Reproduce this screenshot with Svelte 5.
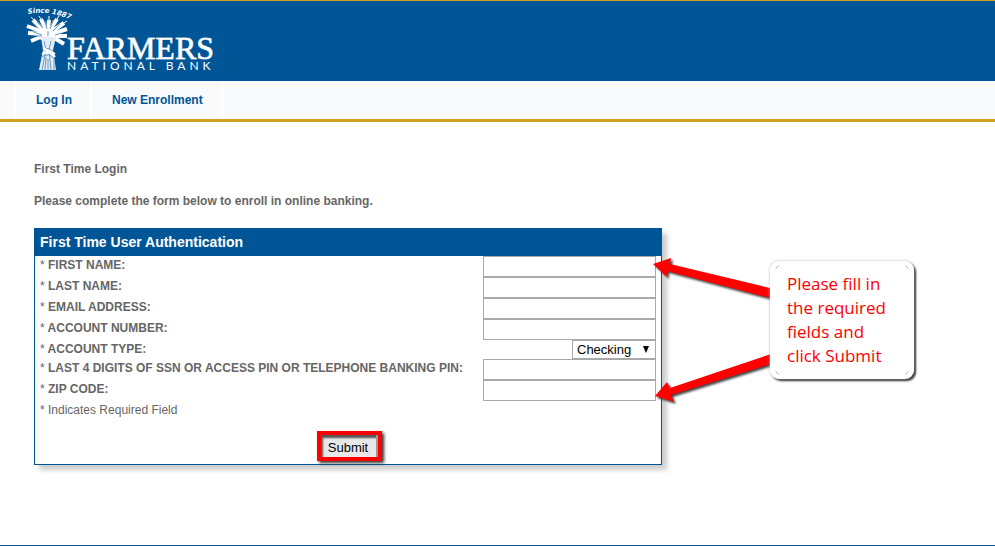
<script lang="ts">
	type Field = { id: string; label: string; kind: 'text' | 'select' };

	const fields: Field[] = [
		{ id: 'first-name', label: 'FIRST NAME:', kind: 'text' },
		{ id: 'last-name', label: 'LAST NAME:', kind: 'text' },
		{ id: 'email', label: 'EMAIL ADDRESS:', kind: 'text' },
		{ id: 'account-number', label: 'ACCOUNT NUMBER:', kind: 'text' },
		{ id: 'account-type', label: 'ACCOUNT TYPE:', kind: 'select' },
		{ id: 'pin', label: 'LAST 4 DIGITS OF SSN OR ACCESS PIN OR TELEPHONE BANKING PIN:', kind: 'text' },
		{ id: 'zip', label: 'ZIP CODE:', kind: 'text' }
	];

	let values: Record<string, string> = $state({
		'first-name': '',
		'last-name': '',
		email: '',
		'account-number': '',
		'account-type': 'Checking',
		pin: '',
		zip: ''
	});

	function handleSubmit(e: SubmitEvent) {
		e.preventDefault();
	}
</script>

<div class="page">
	<header class="banner">
		<svg class="logo" width="200" height="72" viewBox="20 4 200 72" role="img" aria-label="Farmers National Bank">
			<defs>
				<path id="since-arc" d="M28 14 Q48 10 69 19" />
			</defs>
			<text class="since"><textPath href="#since-arc">Since 1887</textPath></text>

			<!-- wheat heads -->
			<path class="hub" d="M41 29 L54 29 L58 35 L55 40 L41 40 L37 34 Z" />
			<g class="heads">
				<path d="M43 36 L31 41" />
				<path d="M43 34 L28 33" />
				<path d="M43 32 L27 26" />
				<path d="M44 31 L33 20" />
				<path d="M46 30 L41 19" />
				<path d="M48 30 L49 20" />
				<path d="M50 30 L57 19" />
				<path d="M51 32 L64 23" />
				<path d="M52 34 L67 29" />
				<path d="M53 36 L67 36" />
				<path d="M53 37 L64 44" />
			</g>
			<g class="thin">
				<path d="M34 20 L31 17 M41 19 L39 16 M49 20 L49 16 M57 19 L59 16 M64 23 L67 21" />
			</g>
			<!-- stalks and tie -->
			<path class="sheaf" d="M41 37 L56 37 L53 50 L56 70 L39 70 L43 50 Z" />
			<g class="cuts">
				<path d="M44 41 L46 50 L42 70 M51 41 L49 50 L51 70 M46 57 L45 70 M48 59 L48 70 M54 60 L54 70" />
				<path d="M43 50 Q49 46 53 52 M41 57 Q50 52 54 59" />
				<path d="M34 32 L42 35 M37 22 L43 28 M45 21 L47 29 M53 20 L50 29 M60 24 L53 31 M62 33 L55 35 M37 36 L42 36 M48 31 L48 36" />
			</g>
			<path class="tie" d="M42 54 Q50 49 55 57 M43 48 L55 54" />

			<text class="name" x="67" y="59">FARMERS</text>
			<text class="sub" x="67" y="70">NATIONAL BANK</text>
		</svg>
	</header>

	<nav class="menu">
		<a href="#login">Log In</a>
		<a href="#enroll">New Enrollment</a>
	</nav>

	<main class="content">
		<h1>First Time Login</h1>
		<p class="intro">Please complete the form below to enroll in online banking.</p>

		<div class="form-area">
			<form class="panel" onsubmit={handleSubmit}>
				<h2>First Time User Authentication</h2>
				<div class="panel-body">
					{#each fields as field (field.id)}
						<div class="row" class:short={field.kind === 'select'}>
							<label for={field.id}><span class="star">*</span> {field.label}</label>
							{#if field.kind === 'select'}
								<span class="select-box">
									<select id={field.id} bind:value={values[field.id]}>
										<option>Checking</option>
										<option>Savings</option>
									</select>
									<svg class="caret" width="6" height="7" viewBox="0 0 6 7" aria-hidden="true">
										<path d="M0 0 H6 L3 7 Z" />
									</svg>
								</span>
							{:else}
								<input id={field.id} type="text" bind:value={values[field.id]} />
							{/if}
						</div>
					{/each}
					<p class="note">* Indicates Required Field</p>
					<div class="actions">
						<span class="highlight"><button type="submit">Submit</button></span>
					</div>
				</div>
			</form>

			<svg class="arrows" width="130" height="160" viewBox="648 250 130 160" aria-hidden="true">
				<path d="M653 264 L671 258 L670 264 L774 289 L774 299 L667 271 L667 277 Z" />
				<path d="M655 396 L667 382 L670 388 L774 353 L774 363 L671 395 L674 402 Z" />
			</svg>
			<aside class="callout">
				<svg class="corners" width="132" height="108" viewBox="0 0 132 108" aria-hidden="true">
					<path d="M0 3 L0 2 L2 0 L3 0 M129 0 L130 0 L132 2 L132 3 M132 105 L132 106 L130 108 L129 108 M3 108 L2 108 L0 106 L0 105" />
				</svg>
				Please fill in<br />the required<br />fields and<br />click Submit
			</aside>
		</div>
	</main>
</div>

<style>
	:global(body) {
		margin: 0;
		background: #fff;
	}

	.page {
		box-sizing: border-box;
		min-height: 100vh;
		display: flex;
		flex-direction: column;
		border-top: 1px solid #d1a01c;
		border-bottom: 1px solid #005596;
		font-family: "Liberation Sans", Arial, sans-serif;
		font-size: 12px;
		color: #666;
	}

	.banner {
		padding: 3px 20px 5px;
		background: #005596;
	}

	.logo {
		display: block;
	}

	.since {
		font: italic bold 7px "DejaVu Sans", sans-serif;
		fill: #fff;
	}

	.hub {
		fill: #fff;
	}

	.heads {
		stroke: #fff;
		stroke-width: 4;
		fill: none;
	}

	.thin {
		stroke: #fff;
		stroke-width: 1;
		fill: none;
	}

	.sheaf {
		fill: #e4edf5;
	}

	.cuts {
		stroke: #6699c0;
		stroke-width: 1;
		fill: none;
	}

	.tie {
		stroke: #fff;
		stroke-width: 2;
		fill: none;
	}

	.name {
		font: 32px "Liberation Serif", "Times New Roman", serif;
		fill: #fff;
		stroke: #fff;
		stroke-width: 1;
		stroke-opacity: 0.7;
	}

	.sub {
		font: 12px Lato, sans-serif;
		letter-spacing: 4px;
		fill: #fff;
	}

	.menu {
		display: flex;
		padding-left: 14px;
		background: #f8fafc;
		border-bottom: 3px solid #d1a01c;
	}

	.menu a {
		padding: 0 18px 0 20px;
		border-left: 2px solid #fff;
		line-height: 38px;
		font-weight: bold;
		color: #005596;
		text-decoration: none;
	}

	.menu a:last-child {
		border-right: 2px solid #fff;
	}

	.content {
		padding: 39px 34px 0;
	}

	h1,
	.intro {
		margin: 0 0 16px;
		font-size: 12px;
		line-height: 16px;
		font-weight: bold;
	}

	.form-area {
		position: relative;
		margin-top: 19px;
	}

	.panel {
		box-sizing: border-box;
		max-width: 628px;
		border: 1px solid #005596;
		background: #fff;
		box-shadow: 5px 5px 5px #ccc;
	}

	h2 {
		margin: 0;
		padding: 0 5px;
		background: #005596;
		color: #fff;
		font-size: 14px;
		line-height: 27px;
	}

	.panel-body {
		padding: 0 5px 3px;
	}

	.row {
		display: flex;
		justify-content: space-between;
		height: 21px;
		line-height: 18px;
		font-weight: bold;
	}

	.short {
		height: 19px;
	}

	.star {
		font-weight: normal;
	}

	.row input {
		box-sizing: border-box;
		width: 173px;
		height: 21px;
		padding: 1px 4px;
		border: 1px solid #a9a9a9;
		background: #fff;
		font: 13px "Liberation Sans", Arial, sans-serif;
	}

	.select-box {
		position: relative;
	}

	select {
		display: block;
		box-sizing: border-box;
		width: 84px;
		height: 19px;
		padding: 0 4px;
		border: 1px solid #a9a9a9;
		border-radius: 0;
		background: #fff;
		color: #000;
		font: 13px "Liberation Sans", Arial, sans-serif;
		appearance: none;
	}

	.caret {
		position: absolute;
		top: 6px;
		right: 7px;
		fill: #000;
		pointer-events: none;
	}

	.note {
		margin: 0;
		line-height: 18px;
	}

	.actions {
		display: flex;
		justify-content: center;
		padding: 12px 0 0 2px;
	}

	.highlight {
		display: flex;
		border: 4px solid #f00;
		box-shadow: 2px 2px 3px #333;
	}

	button {
		width: 57px;
		height: 22px;
		padding: 2px 0 0;
		border: 0;
		border-right: 2px solid #999;
		border-radius: 0;
		background: #e8e8e8;
		box-shadow: inset 2px 3px 2px #555;
		color: #000;
		font: 13px "Liberation Sans", Arial, sans-serif;
	}

	.arrows {
		position: absolute;
		top: 22px;
		left: 614px;
		pointer-events: none;
		fill: #f00;
		filter: drop-shadow(2px 2px 1px #444);
	}

	.callout {
		position: absolute;
		top: 33px;
		left: 736px;
		box-sizing: border-box;
		width: 144px;
		padding: 11px 12px 11px 17px;
		border-radius: 9px;
		background: #fff;
		box-shadow: 0 0 3px #bbb, 2px 2px 2px #222;
		font: 17px/24px "Open Sans", "Noto Sans", sans-serif;
		color: #f00;
		white-space: nowrap;
	}

	.corners {
		position: absolute;
		top: 5px;
		left: 6px;
		overflow: visible;
		fill: none;
		stroke: #bbb;
	}
</style>
